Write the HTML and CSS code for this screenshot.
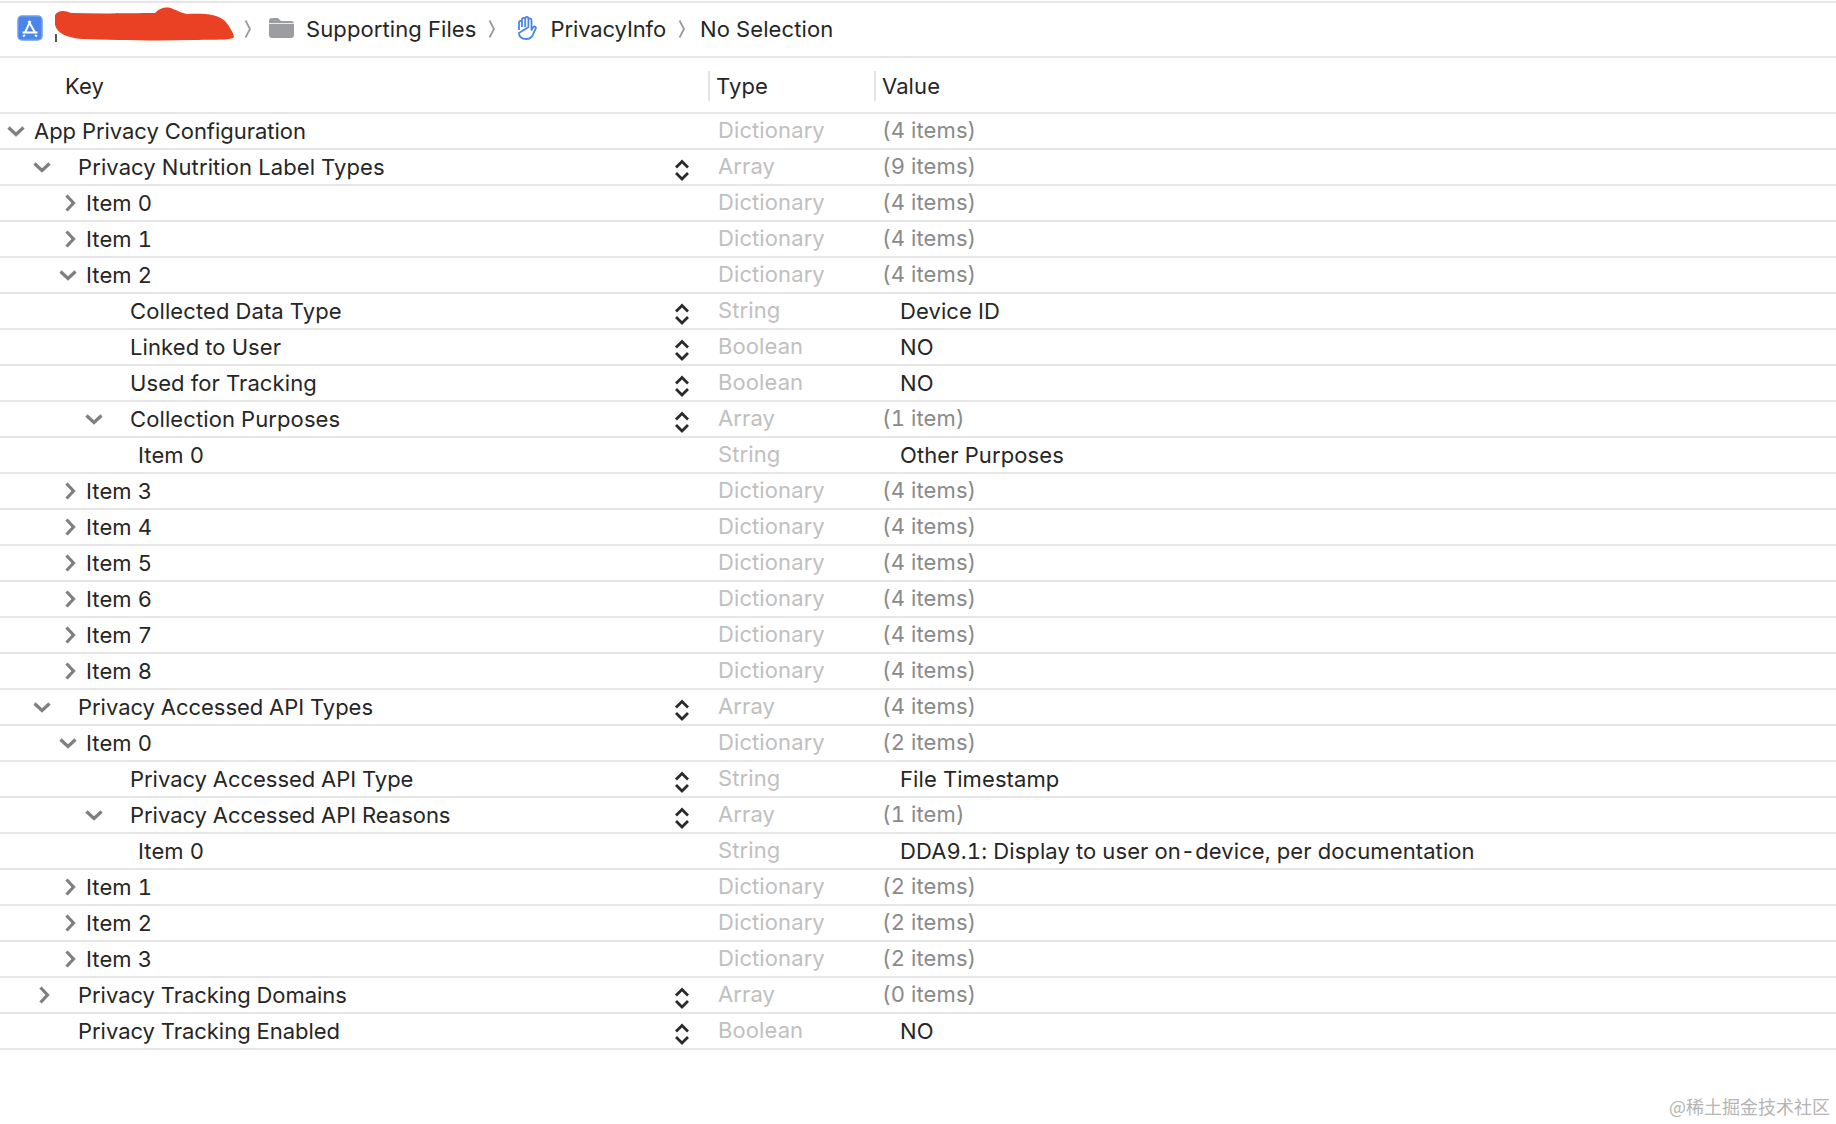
FILE: index.html
```html
<!DOCTYPE html>
<html lang="en">
<head>
<meta charset="utf-8">
<title>PrivacyInfo</title>
<link rel="stylesheet" href="styles.css">
</head>
<body>
<svg class="defs" width="0" height="0" aria-hidden="true">
  <symbol id="right" viewBox="0 0 12 20"><path d="M2.500 2.500 9.500 10 2.500 17.500" fill="none" stroke="#7f7f7f" stroke-width="3.200"/></symbol>
  <symbol id="down" viewBox="0 0 20 12"><path d="M2.500 2.500 10 9.500 17.500 2.500" fill="none" stroke="#7f7f7f" stroke-width="3.200"/></symbol>
  <symbol id="stepper" viewBox="0 0 16 24"><path d="M2 9.500 8 3.500 14 9.500M2 15 8 21 14 15" fill="none" stroke="#2a2a2a" stroke-width="2.800"/></symbol>
  <symbol id="crumb" viewBox="0 0 8 20"><path d="M1.500 1.500 6 10 1.500 18.500" fill="none" stroke="#9a9a9a" stroke-width="1.800"/></symbol>
</svg>
<div class="crumbs">
  <svg class="app" viewBox="0 0 26 26"><rect x="1" y="1" width="24" height="24" rx="4" fill="#4a86ea" stroke="#6d9ff0" stroke-width="1.500"/><path d="M13.500 6 8 17.500M11.500 6 18 17.500M5.500 17.500H20.500M8 20 6 21.500M18 20 20 21.500" fill="none" stroke="#fff" stroke-width="2"/></svg>
  <svg class="scribble" viewBox="0 0 182 36"><path d="M2 8C5 3 12 3 18 6 50 7 80 6 102 6 106 1 114-1 120 2 126 4 128 6 134 7 150 6 165 7 172 14 177 20 181 27 181 30 178 34 160 32 140 33 100 34 60 33 30 32 14 31 4 26 2 18Z" fill="#ea4125"/><path d="M3 27V35" stroke="#555" stroke-width="2"/></svg>
  <svg class="sep first"><use href="#crumb"/></svg>
  <svg class="folder" viewBox="0 0 25 20"><path d="M0 3Q0 0 3 0H9L12 3H22Q25 3 25 6V17Q25 20 22 20H3Q0 20 0 17Z" fill="#9b9da0"/><path d="M0 5.500H25" stroke="#fff" stroke-width=".8"/></svg>
  <span class="crumb-text files">Supporting Files</span>
  <svg class="sep"><use href="#crumb"/></svg>
  <svg class="hand" viewBox="0 0 20 24"><path d="M2 14V6.500Q2 4.800 3.500 4.800 5 4.800 5 6.500V11M5 11V3.500Q5 1.800 6.600 1.800 8.200 1.800 8.200 3.500V11M8.200 11V2.700Q8.200 1 9.800 1 11.400 1 11.400 2.700V11M11.400 11V4Q11.400 2.400 13 2.400 14.500 2.400 14.500 4V14L16 11.500Q17.200 10 18.500 10.900 19.300 11.600 18.600 12.900L15.500 19.500Q13.600 23 9.500 23 2 23 2 17Z" fill="#fff" stroke="#4a86ea" stroke-width="1.800" stroke-linejoin="round"/></svg>
  <span class="crumb-text info">PrivacyInfo</span>
  <svg class="sep"><use href="#crumb"/></svg>
  <span class="crumb-text">No Selection</span>
</div>
<div class="table">
  <div class="row head"><div class="key">Key</div><div class="type"><span>Type</span></div><div class="value"><span>Value</span></div></div>

  <div class="row"><div class="key l0 snug"><svg class="down"><use href="#down"/></svg><span>App Privacy Configuration</span></div><div class="type">Dictionary</div><div class="value">(4 items)</div></div>
  <div class="row"><div class="key l1"><svg class="down"><use href="#down"/></svg><span>Privacy Nutrition Label Types</span><svg class="step"><use href="#stepper"/></svg></div><div class="type">Array</div><div class="value">(9 items)</div></div>
  <div class="row"><div class="key l2"><svg class="right"><use href="#right"/></svg><span>Item 0</span></div><div class="type">Dictionary</div><div class="value">(4 items)</div></div>
  <div class="row"><div class="key l2"><svg class="right"><use href="#right"/></svg><span>Item 1</span></div><div class="type">Dictionary</div><div class="value">(4 items)</div></div>
  <div class="row"><div class="key l2"><svg class="down"><use href="#down"/></svg><span>Item 2</span></div><div class="type">Dictionary</div><div class="value">(4 items)</div></div>
  <div class="row"><div class="key l3"><span>Collected Data Type</span><svg class="step"><use href="#stepper"/></svg></div><div class="type">String</div><div class="value plain">Device ID</div></div>
  <div class="row"><div class="key l3"><span>Linked to User</span><svg class="step"><use href="#stepper"/></svg></div><div class="type">Boolean</div><div class="value plain">NO</div></div>
  <div class="row"><div class="key l3"><span>Used for Tracking</span><svg class="step"><use href="#stepper"/></svg></div><div class="type">Boolean</div><div class="value plain">NO</div></div>
  <div class="row"><div class="key l3"><svg class="down"><use href="#down"/></svg><span>Collection Purposes</span><svg class="step"><use href="#stepper"/></svg></div><div class="type">Array</div><div class="value">(1 item)</div></div>
  <div class="row"><div class="key l4"><span>Item 0</span></div><div class="type">String</div><div class="value plain">Other Purposes</div></div>
  <div class="row"><div class="key l2"><svg class="right"><use href="#right"/></svg><span>Item 3</span></div><div class="type">Dictionary</div><div class="value">(4 items)</div></div>
  <div class="row"><div class="key l2"><svg class="right"><use href="#right"/></svg><span>Item 4</span></div><div class="type">Dictionary</div><div class="value">(4 items)</div></div>
  <div class="row"><div class="key l2"><svg class="right"><use href="#right"/></svg><span>Item 5</span></div><div class="type">Dictionary</div><div class="value">(4 items)</div></div>
  <div class="row"><div class="key l2"><svg class="right"><use href="#right"/></svg><span>Item 6</span></div><div class="type">Dictionary</div><div class="value">(4 items)</div></div>
  <div class="row"><div class="key l2"><svg class="right"><use href="#right"/></svg><span>Item 7</span></div><div class="type">Dictionary</div><div class="value">(4 items)</div></div>
  <div class="row"><div class="key l2"><svg class="right"><use href="#right"/></svg><span>Item 8</span></div><div class="type">Dictionary</div><div class="value">(4 items)</div></div>
  <div class="row"><div class="key l1 snug"><svg class="down"><use href="#down"/></svg><span>Privacy Accessed API Types</span><svg class="step"><use href="#stepper"/></svg></div><div class="type">Array</div><div class="value">(4 items)</div></div>
  <div class="row"><div class="key l2"><svg class="down"><use href="#down"/></svg><span>Item 0</span></div><div class="type">Dictionary</div><div class="value">(2 items)</div></div>
  <div class="row"><div class="key l3 snug"><span>Privacy Accessed API Type</span><svg class="step"><use href="#stepper"/></svg></div><div class="type">String</div><div class="value plain">File Timestamp</div></div>
  <div class="row"><div class="key l3 snug"><svg class="down"><use href="#down"/></svg><span>Privacy Accessed API Reasons</span><svg class="step"><use href="#stepper"/></svg></div><div class="type">Array</div><div class="value">(1 item)</div></div>
  <div class="row"><div class="key l4"><span>Item 0</span></div><div class="type">String</div><div class="value plain">DDA9.1: Display to user on-device, per documentation</div></div>
  <div class="row"><div class="key l2"><svg class="right"><use href="#right"/></svg><span>Item 1</span></div><div class="type">Dictionary</div><div class="value">(2 items)</div></div>
  <div class="row"><div class="key l2"><svg class="right"><use href="#right"/></svg><span>Item 2</span></div><div class="type">Dictionary</div><div class="value">(2 items)</div></div>
  <div class="row"><div class="key l2"><svg class="right"><use href="#right"/></svg><span>Item 3</span></div><div class="type">Dictionary</div><div class="value">(2 items)</div></div>
  <div class="row"><div class="key l1 snug"><svg class="right"><use href="#right"/></svg><span>Privacy Tracking Domains</span><svg class="step"><use href="#stepper"/></svg></div><div class="type">Array</div><div class="value">(0 items)</div></div>
  <div class="row"><div class="key l1 snug"><span>Privacy Tracking Enabled</span><svg class="step"><use href="#stepper"/></svg></div><div class="type">Boolean</div><div class="value plain">NO</div></div>
</div>
<div class="watermark">@稀土掘金技术社区</div>
</body>
</html>
```
FILE: styles.css
```css
* { box-sizing: border-box; }
html, body { margin: 0; height: 100%; }
body {
  position: relative;
  width: 1836px;
  height: 1124px;
  overflow: hidden;
  background: #fff;
  color: #262626;
  font-family: Inter, "Noto Sans", sans-serif;
  font-size: 22px;
  font-variant-numeric: tabular-nums;
  letter-spacing: 0.1px;
}
.defs { position: absolute; }
.crumbs {
  display: flex;
  align-items: center;
  height: 57px;
  margin-top: 1px;
  padding: 0 0 1px 17px;
  border-top: 2px solid #e6e6e6;
  border-bottom: 2px solid #e6e6e6;
}
.app { width: 26px; height: 26px; margin-top: -2px; flex: none; }
.scribble { width: 182px; height: 36px; margin: -8px 0 0 10px; flex: none; }
.sep { width: 8px; height: 20px; margin: 0 11px 0 9px; flex: none; }
.sep.first { margin: 0 17px 0 9px; }
.folder { width: 25px; height: 20px; margin: -2px 12px 0 0; flex: none; }
.hand { width: 20px; height: 24px; margin: -3px 14px 0 10px; flex: none; }
.files + .sep { margin: 0 11px 0 11px; }
.info { letter-spacing: -0.12px; }
.info + .sep { margin: 0 14px 0 12px; }
.crumb-text { white-space: nowrap; }
.table { display: flex; flex-direction: column; }
.row {
  display: grid;
  grid-template-columns: 708px 166px 1fr;
  height: 36px;
  border-bottom: 2px solid #e6e6e6;
  align-items: center;
}
.row.head { height: 56px; padding-top: 2px; }
.head .key { padding-left: 65px; }
.head .type, .head .value { height: 30px; display: flex; align-items: center; padding-left: 6px; border-left: 2px solid #e4e4e4; color: #262626; margin-top: 0; }
.key { display: flex; align-items: center; position: relative; white-space: nowrap; }
.l0 { padding-left: 34px; }
.l1 { padding-left: 78px; }
.l2 { padding-left: 86px; }
.l3 { padding-left: 130px; }
.l4 { padding-left: 138px; }
.snug { letter-spacing: -0.03px; }
.down, .right { position: absolute; top: 50%; }
.down { width: 20px; height: 12px; margin-top: -6px; }
.right { width: 12px; height: 20px; margin-top: -10px; }
.l0 .down { left: 6px; }
.l1 .down { left: 32px; }
.l1 .right { left: 38px; }
.l2 .down { left: 58px; }
.l2 .right { left: 64px; }
.l3 .down { left: 84px; }
.step { position: absolute; left: 674px; top: 50%; width: 16px; height: 24px; margin-top: -9px; }
.type { color: #c0c0c0; padding-left: 10px; margin-top: -2px; }
.value { color: #8a8a8a; padding-left: 8px; margin-top: -2px; }
.value.plain { color: #262626; padding-left: 26px; margin-top: 0; }
.watermark {
  position: absolute;
  right: 6px;
  bottom: 5px;
  font-family: "Noto Sans CJK SC", sans-serif;
  font-size: 18px;
  letter-spacing: 0;
  color: #b4b4b4;
}
```
